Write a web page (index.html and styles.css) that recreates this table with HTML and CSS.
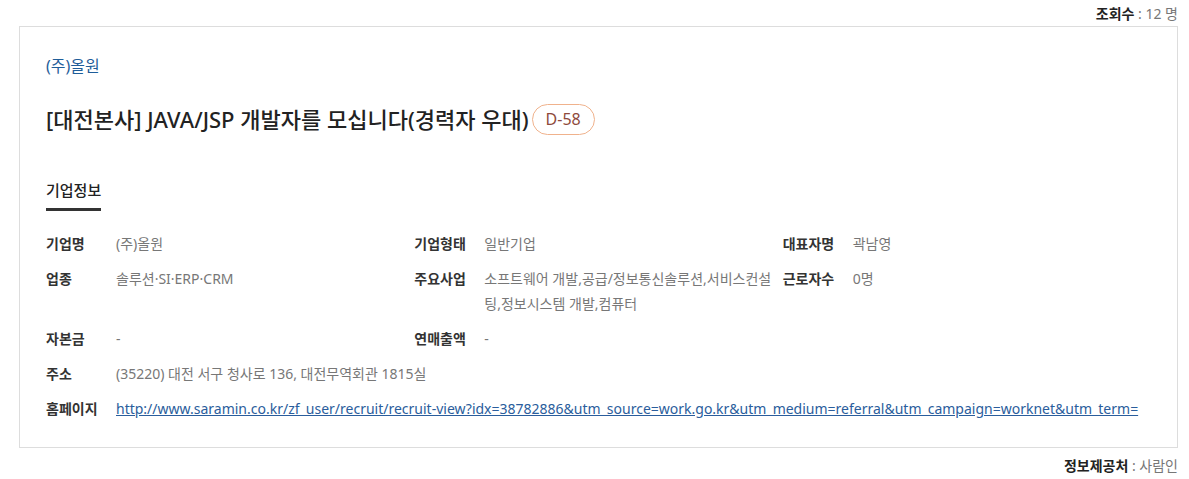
FILE: index.html
```html
<!DOCTYPE html>
<html lang="ko">
<head>
    <meta charset="UTF-8">
    <meta name="viewport" content="width=device-width, initial-scale=1.0">
    <title>기업정보 - (주)올원</title>
    <link rel="stylesheet" href="styles.css">
</head>
<body>

<div class="page">
    <div class="meta-line"><strong>조회수</strong> : 12 명</div>

    <div class="recruit-box">
        <div class="company-name">(주)올원</div>

        <div class="title-row">
            <h1 class="recruit-title">[대전본사] JAVA/JSP 개발자를 모십니다(경력자 우대)</h1>
            <span class="dday">D-58</span>
        </div>

        <div class="tabs">
            <span class="tab active">기업정보</span>
        </div>

        <div class="info-grid">
            <div class="info-item">
                <span class="label">기업명</span>
                <span class="value">(주)올원</span>
            </div>
            <div class="info-item">
                <span class="label">기업형태</span>
                <span class="value">일반기업</span>
            </div>
            <div class="info-item">
                <span class="label">대표자명</span>
                <span class="value">곽남영</span>
            </div>

            <div class="info-item">
                <span class="label">업종</span>
                <span class="value">솔루션·SI·ERP·CRM</span>
            </div>
            <div class="info-item">
                <span class="label">주요사업</span>
                <span class="value">소프트웨어 개발,공급/정보통신솔루션,서비스컨설팅,정보시스템 개발,컴퓨터</span>
            </div>
            <div class="info-item">
                <span class="label">근로자수</span>
                <span class="value">0명</span>
            </div>

            <div class="info-item">
                <span class="label">자본금</span>
                <span class="value">-</span>
            </div>
            <div class="info-item span-2">
                <span class="label">연매출액</span>
                <span class="value">-</span>
            </div>

            <div class="info-item span-3">
                <span class="label">주소</span>
                <span class="value">(35220) 대전 서구 청사로 136, 대전무역회관 1815실</span>
            </div>

            <div class="info-item span-3">
                <span class="label">홈페이지</span>
                <span class="value"><a href="#" class="homepage">http://www.saramin.co.kr/zf_user/recruit/recruit-view?idx=38782886&amp;utm_source=work.go.kr&amp;utm_medium=referral&amp;utm_campaign=worknet&amp;utm_term=</a></span>
            </div>
        </div>
    </div>

    <div class="meta-line source"><strong>정보제공처</strong> : 사람인</div>
</div>

</body>
</html>
```

FILE: styles.css
```css
body {
    margin: 0;
    font-family: "Noto Sans", "Noto Sans CJK KR", sans-serif;
    color: #333;
    background: #fff;
}
.page {
    padding: 5px 11px 0 19px;
}
.meta-line {
    text-align: right;
    font-size: 14px;
    line-height: 18px;
    color: #777;
    margin-bottom: 3px;
}
.meta-line strong {
    color: #222;
    font-weight: 700;
}
.meta-line.source {
    margin-top: 9px;
    margin-bottom: 0;
}
.recruit-box {
    border: 1px solid #ddd;
    padding: 28px 26px 26px;
}
.company-name {
    font-size: 16px;
    line-height: 22px;
    color: #1f5d99;
}
.title-row {
    display: flex;
    align-items: center;
    gap: 3px;
    margin-top: 27px;
}
.recruit-title {
    margin: 0;
    font-size: 22px;
    font-weight: 500;
    line-height: 31px;
    color: #222;
}
.dday {
    display: inline-block;
    height: 29px;
    line-height: 29px;
    padding: 0 13px;
    border: 1px solid #f0b28c;
    border-radius: 16px;
    font-size: 16px;
    color: #8e4a3c;
}
.tabs {
    margin-top: 45px;
    display: flex;
}
.tab {
    font-size: 15px;
    font-weight: 500;
    line-height: 20px;
    color: #222;
    padding-bottom: 8px;
    border-bottom: 3px solid #333;
}
.info-grid {
    display: grid;
    grid-template-columns: repeat(3, 1fr);
    row-gap: 10px;
    margin-top: 20px;
}
.info-item {
    display: flex;
    font-size: 14px;
    line-height: 25px;
}
.info-item.span-2 {
    grid-column: span 2;
}
.info-item.span-3 {
    grid-column: span 3;
}
.label {
    flex: 0 0 70px;
    font-weight: 700;
    color: #333;
}
.value {
    flex: 1;
    color: #777;
    word-break: break-all;
}
.homepage {
    color: #2a5d9c;
    text-decoration: underline;
}
```
